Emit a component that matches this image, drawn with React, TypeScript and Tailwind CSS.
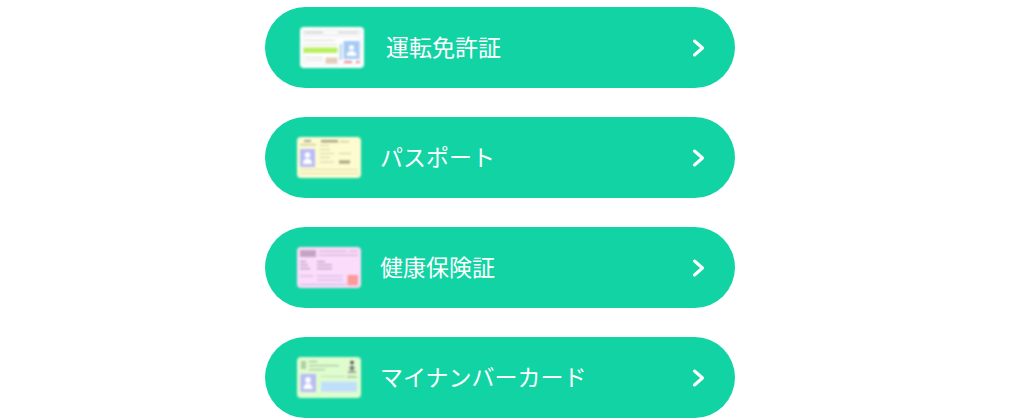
const LicenseCard = () => (
  <svg width="64" height="41" viewBox="0 0 64 41" className="shrink-0 blur-[0.8px]">
    <rect width="64" height="41" rx="4" fill="#ffffff" />
    <rect x="3.5" y="3.5" width="57" height="4" fill="#fff" stroke="#d8d8d8" strokeWidth="0.7" />
    <rect x="5" y="5" width="18" height="1" fill="#bcbcbc" />
    <rect x="38" y="5" width="20" height="1" fill="#c4c4c4" />
    <rect x="3.5" y="10" width="57" height="27" fill="#fff" stroke="#e4e4e4" strokeWidth="0.7" />
    <rect x="5" y="13" width="30" height="1" fill="#d8d8d8" />
    <rect x="5" y="17" width="32" height="1" fill="#dedede" />
    <rect x="3.5" y="20.5" width="34" height="5.5" fill="#b8f060" />
    <rect x="5" y="30" width="18" height="1" fill="#d8d8d8" />
    <rect x="5" y="33" width="18" height="1" fill="#dcdcdc" />
    <rect x="25.5" y="30.5" width="12" height="6" fill="#e4cdb8" />
    <rect x="39.5" y="17" width="2.5" height="16" fill="#bcd8f0" />
    <rect x="43.5" y="14" width="16" height="18" fill="#a4caf3" />
    <circle cx="51.5" cy="20.5" r="2.6" fill="#fff" />
    <path d="M46.5 29 q0 -5 5 -5 q5 0 5 5 z" fill="#fff" />
    <rect x="44" y="34" width="8" height="2" fill="#f08a9a" />
    <rect x="56" y="34" width="3.5" height="2" fill="#f08a9a" />
  </svg>
);

const PassportCard = () => (
  <svg width="64" height="41" viewBox="0 0 64 41" className="shrink-0 blur-[0.8px]">
    <rect width="64" height="41" rx="4" fill="#fdfbd0" />
    <rect x="7" y="3" width="7" height="2" fill="#a8a78c" />
    <rect x="3" y="7" width="16" height="1.3" fill="#c4c2a2" />
    <rect x="24" y="3" width="17" height="2.4" fill="#a5a47f" />
    <rect x="43" y="4" width="9" height="1.2" fill="#c4c2a2" />
    <rect x="23" y="8" width="9" height="1" fill="#d4d2aa" />
    <rect x="3" y="12" width="15" height="18" fill="#b9bcf6" />
    <circle cx="10.5" cy="18" r="2.8" fill="#fff" />
    <path d="M6 27 q0 -5.5 4.5 -5.5 q4.5 0 4.5 5.5 z" fill="#fff" />
    <rect x="23" y="12" width="10" height="1" fill="#d0cea4" />
    <rect x="23" y="16" width="14" height="1" fill="#d0cea4" />
    <rect x="23" y="20" width="10" height="1" fill="#d0cea4" />
    <rect x="42" y="16" width="12" height="1" fill="#d0cea4" />
    <rect x="23" y="24.5" width="14" height="1" fill="#d0cea4" />
    <rect x="42" y="23.5" width="11" height="3" fill="#a5a47f" />
    <rect x="3" y="32" width="58" height="1" fill="#e0e0a8" />
    <rect x="3" y="36" width="58" height="1" fill="#e0e0a8" />
  </svg>
);

const InsuranceCard = () => (
  <svg width="64" height="41" viewBox="0 0 64 41" className="shrink-0 blur-[0.8px]">
    <rect width="64" height="41" rx="4" fill="#fcdcfb" />
    <rect x="3" y="3" width="16" height="7" fill="#c4a4c4" />
    <rect x="22" y="3.5" width="28" height="1.3" fill="#d4b4d4" />
    <rect x="52" y="3.5" width="9" height="1.3" fill="#d4b4d4" />
    <rect x="22" y="7.5" width="39" height="1.3" fill="#d4b4d4" />
    <rect x="3" y="14" width="6" height="1.2" fill="#b898b8" />
    <rect x="20" y="14" width="8" height="1.2" fill="#b898b8" />
    <rect x="3" y="17.5" width="8" height="1.2" fill="#b898b8" />
    <rect x="20" y="17.5" width="15" height="1.2" fill="#b898b8" />
    <rect x="3" y="21" width="10" height="1.2" fill="#b898b8" />
    <rect x="20" y="21" width="15" height="1.2" fill="#b898b8" />
    <rect x="3" y="28.5" width="13" height="1.1" fill="#d4b4d4" />
    <rect x="20" y="28.5" width="26" height="1.1" fill="#c8b8e4" />
    <rect x="20" y="32.5" width="26" height="1.1" fill="#c8b8e4" />
    <rect x="3" y="37" width="46" height="1.1" fill="#c8b8e4" />
    <rect x="50.5" y="28" width="10.5" height="10.5" fill="#fa9a9a" />
  </svg>
);

const MynumberCard = () => (
  <svg width="64" height="41" viewBox="0 0 64 41" className="shrink-0 blur-[0.8px]">
    <rect width="64" height="41" rx="4" fill="#dffccf" />
    <rect x="4" y="4" width="5" height="8" fill="#b0d0a0" />
    <rect x="12" y="4" width="8" height="1.2" fill="#a0bc94" />
    <rect x="12" y="8" width="30" height="1.2" fill="#a8c49c" />
    <rect x="12" y="12" width="16" height="1.2" fill="#a8c49c" />
    <circle cx="55" cy="5.5" r="1.8" fill="#444" />
    <path d="M52 11 l3 -3 l3 3 l-3 3 z" fill="#777" />
    <path d="M51 15 h8" stroke="#666" strokeWidth="1.2" />
    <rect x="3.5" y="17" width="15.5" height="18" fill="#b9bcf6" />
    <circle cx="11" cy="23" r="2.9" fill="#fff" />
    <path d="M6.5 32 q0 -5.5 4.5 -5.5 q4.5 0 4.5 5.5 z" fill="#fff" />
    <rect x="24" y="19" width="24" height="0.8" fill="#b4d4a6" />
    <rect x="50" y="19" width="9.5" height="1.5" fill="#a0bc94" />
    <rect x="24" y="24.5" width="36" height="10.5" fill="#c4e2fa" />
    <path d="M24 28 h36 M24 31.5 h36" stroke="#acd0f0" strokeWidth="0.6" />
  </svg>
);

const items = [
  { label: "運転免許証", card: <LicenseCard />, pad: "pl-[35px]", gap: "gap-[22px]" },
  { label: "パスポート", card: <PassportCard />, pad: "pl-[32px]", gap: "gap-[19px]" },
  { label: "健康保険証", card: <InsuranceCard />, pad: "pl-[32px]", gap: "gap-[19px]" },
  { label: "マイナンバーカード", card: <MynumberCard />, pad: "pl-[32px]", gap: "gap-[19px]" },
];

export default function App() {
  return (
    <div className="w-[1020px] h-[420px] overflow-hidden bg-white flex flex-col items-center gap-[29px] pt-[7px] pr-[20px] font-['Noto_Sans_CJK_JP','Noto_Sans',sans-serif]">
      {items.map((item) => (
        <button
          key={item.label}
          className={`w-[470px] h-[81px] shrink-0 rounded-full bg-[#12d3a4] flex items-center text-white text-[23px] pr-[29px] ${item.pad} ${item.gap}`}
        >
          {item.card}
          <span className="flex-1 text-left pb-[2px]">{item.label}</span>
          <svg width="14" height="18" viewBox="0 0 14 18" fill="none">
            <path d="M2.5 2 L10.5 9 L2.5 16" stroke="#ffffff" strokeWidth="3" strokeLinecap="round" strokeLinejoin="round" />
          </svg>
        </button>
      ))}
    </div>
  );
}
